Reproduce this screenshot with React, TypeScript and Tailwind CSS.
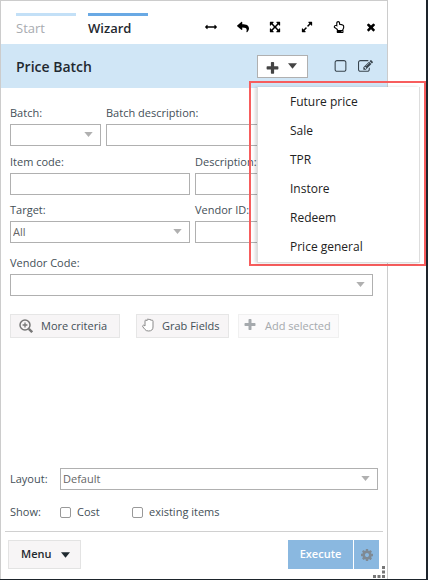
import React from "react";
import { FaReply, FaRegHandPointUp } from "react-icons/fa";

const ICONS = {
  arrowsH:
    "M1792 896q0 26-19 45l-256 256q-19 19-45 19t-45-19-19-45v-128h-1024v128q0 26-19 45t-45 19-45-19l-256-256q-19-19-19-45t19-45l256-256q19-19 45-19t45 19 19 45v128h1024v-128q0-26 19-45t45-19 45 19l256 256q19 19 19 45z",
  arrowsAlt:
    "M1411 541l-355 355 355 355 144-144q29-31 70-14 39 17 39 59v448q0 26-19 45t-45 19h-448q-42 0-59-40-17-39 14-69l144-144-355-355-355 355 144 144q31 30 14 69-17 40-59 40h-448q-26 0-45-19t-19-45v-448q0-42 40-59 39-17 69 14l144 144 355-355-355-355-144 144q-19 19-45 19-12 0-24-5-40-17-40-59v-448q0-26 19-45t45-19h448q42 0 59 40 17 39-14 69l-144 144 355 355 355-355-144-144q-31-30-14-69 17-40 59-40h448q26 0 45 19t19 45v448q0 42-39 59-13 5-25 5-26 0-45-19z",
  expand:
    "M883 1056q0 13-10 23l-332 332 144 144q19 19 19 45t-19 45-45 19h-448q-26 0-45-19t-19-45v-448q0-26 19-45t45-19 45 19l144 144 332-332q10-10 23-10t23 10l114 114q10 10 10 23zm781-864v448q0 26-19 45t-45 19-45-19l-144-144-332 332q-10 10-23 10t-23-10l-114-114q-10-10-10-23t10-23l332-332-144-144q-19-19-19-45t19-45 45-19h448q26 0 45 19t19 45z",
  times:
    "M1490 1322q0 40-28 68l-136 136q-28 28-68 28t-68-28l-294-294-294 294q-28 28-68 28t-68-28l-136-136q-28-28-28-68t28-68l294-294-294-294q-28-28-28-68t28-68l136-136q28-28 68-28t68 28l294 294 294-294q28-28 68-28t68 28l136 136q28 28 28 68t-28 68l-294 294 294 294q28 28 28 68z",
  edit:
    "M888 1184l116-116-152-152-116 116v56h96v96h56zm440-720q-16-16-33 1l-350 350q-17 17-1 33t33-1l350-350q17-17 1-33zm80 594v190q0 119-84.500 203.500t-203.500 84.500h-832q-119 0-203.500-84.500t-84.500-203.500v-832q0-119 84.500-203.500t203.500-84.500h832q63 0 117 25 15 7 18 23 3 17-9 29l-49 49q-14 14-32 8-23-6-45-6h-832q-66 0-113 47t-47 113v832q0 66 47 113t113 47h832q66 0 113-47t47-113v-126q0-13 9-22l64-64q15-15 35-7t20 29zm-96-738l288 288-672 672h-288v-288zm444 132l-92 92-288-288 92-92q28-28 68-28t68 28l152 152q28 28 28 68t-28 68z",
  square:
    "M1312 256h-832q-66 0-113 47t-47 113v832q0 66 47 113t113 47h832q66 0 113-47t47-113v-832q0-66-47-113t-113-47zm288 160v832q0 119-84.500 203.500t-203.500 84.500h-832q-119 0-203.500-84.500t-84.500-203.500v-832q0-119 84.500-203.500t203.500-84.500h832q119 0 203.500 84.500t84.500 203.500z",
  plus:
    "M1600 736v192q0 40-28 68t-68 28h-416v416q0 40-28 68t-68 28h-192q-40 0-68-28t-28-68v-416h-416q-40 0-68-28t-28-68v-192q0-40 28-68t68-28h416v-416q0-40 28-68t68-28h192q40 0 68 28t28 68v416h416q40 0 68 28t28 68z",
  cog:
    "M1152 896q0-106-75-181t-181-75-181 75-75 181 75 181 181 75 181-75 75-181zm512-109v222q0 12-8 23t-20 13l-185 28q-19 54-39 91 35 50 107 138 10 12 10 25t-9 23q-27 37-99 108t-94 71q-12 0-26-9l-138-108q-44 23-91 38-16 136-29 186-7 28-36 28h-222q-14 0-24.500-8.500t-11.500-21.500l-28-184q-49-16-90-37l-141 107q-10 9-25 9-14 0-25-11-126-114-165-168-7-10-7-23 0-12 8-23 15-21 51-66.500t54-70.500q-27-50-41-99l-183-27q-13-2-21-12.500t-8-23.500v-222q0-12 8-23t19-13l186-28q14-46 39-92-40-57-107-138-10-12-10-24 0-10 9-23 26-36 98.500-107.500t94.500-71.500q13 0 26 10l138 107q44-23 91-38 16-136 29-186 7-28 36-28h222q14 0 24.500 8.500t11.500 21.500l28 184q49 16 90 37l142-107q9-9 24-9 13 0 25 10 129 119 165 170 7 8 7 22 0 12-8 23-15 21-51 66.500t-54 70.500q26 50 41 98l183 28q13 2 21 12.500t8 23.500z",
};

function Icon({ name, className }: { name: keyof typeof ICONS; className: string }) {
  return (
    <svg viewBox="0 0 1792 1792" fill="currentColor" aria-hidden="true" className={className}>
      <path d={ICONS[name]} />
    </svg>
  );
}

function Caret({ className }: { className: string }) {
  return (
    <svg viewBox="0 0 10 6" fill="currentColor" aria-hidden="true" className={className}>
      <path d="M0 0h10L5 6z" />
    </svg>
  );
}

function ZoomIcon() {
  return (
    <svg viewBox="0 0 14 14" fill="none" stroke="currentColor" aria-hidden="true" className="size-[14px] text-[#777]">
      <circle cx="6" cy="6" r="5" strokeWidth="1.500" />
      <path d="M6 3.600v4.800M3.600 6h4.800" strokeWidth="1.300" />
      <path d="M9.800 9.800l3.400 3.400" strokeWidth="2.400" />
    </svg>
  );
}

function HandIcon() {
  return (
    <svg viewBox="0 0 12 14" fill="#fff" stroke="currentColor" strokeLinejoin="round" aria-hidden="true" className="mb-[2px] h-[14px] w-3 text-[#8a8a8a]">
      <path d="M3 8V3q0-1 .9-1t1 .9Q4.900 1 5.900 1T7 2q.1-.7 1-.7T9 2.500q.2-.5 1-.5t1 1.200V9q0 4-4.500 4Q4 13 3 11.500L.8 8.800Q.3 7.500 1.300 7.200 2 7 3 8z" />
    </svg>
  );
}

const box = "h-[22px] w-full rounded-none border border-[#b0b0b0] bg-white text-[11px] text-[#666] outline-none";

function TextField({ id, label, className }: { id: string; label: string; className: string }) {
  return (
    <div className={className}>
      <label htmlFor={id} className="mb-px block h-5 leading-5 whitespace-nowrap">
        {label}
      </label>
      <input id={id} type="text" className={`${box} block`} />
    </div>
  );
}

function Select({ id, value }: { id: string; value: string }) {
  return (
    <div className="relative flex-1">
      <select id={id} defaultValue={value} className={`${box} block appearance-none pl-[2px]`}>
        <option value={value}>{value}</option>
      </select>
      <Caret className="pointer-events-none absolute top-2 right-2 h-[5px] w-[9px] text-[#b0b0b0]" />
    </div>
  );
}

function SelectField({ id, label, value, className }: { id: string; label: string; value: string; className: string }) {
  return (
    <div className={className}>
      <label htmlFor={id} className="mb-px block h-5 leading-5 whitespace-nowrap">
        {label}
      </label>
      <Select id={id} value={value} />
    </div>
  );
}

const priceTypes = ["Future price", "Sale", "TPR", "Instore", "Redeem", "Price general"];

function AddMenu() {
  return (
    <div className="relative">
      <button type="button" aria-label="Add" className="flex h-[23px] w-[51px] items-center gap-2 border border-[#b0b0b0] bg-white pl-[7px] text-[#444]">
        <Icon name="plus" className="mt-1 size-[15px]" />
        <Caret className="h-[6px] w-[9px]" />
      </button>
      <div className="absolute top-[26px] -left-2 z-10 w-[177px] border-2 border-[#f75d5d] pt-1 pr-1 pb-px pl-[6px]">
        <ul role="menu" className="border-r border-b border-l border-[#ddd] bg-white pt-px shadow-[-2px_0_3px_rgba(0,0,0,0.15)]">
          {priceTypes.map((type) => (
            <li key={type}>
              <button type="button" role="menuitem" className="block h-[29px] w-full pl-8 text-left text-[12px] text-[#222]">
                {type}
              </button>
            </li>
          ))}
        </ul>
      </div>
    </div>
  );
}

const tool = "flex size-[14px] items-center justify-center";

export default function App() {
  return (
    <div className="min-h-screen border-r-2 border-b border-[#1d242b] bg-white font-['Open_Sans','Noto_Sans',sans-serif] text-[11px] text-[#444f57]">
      <main className="relative mr-[38px] flex min-h-[579px] flex-col border-t border-r border-l border-[#ccc]">
        <header className="flex h-[43px] pl-[15px]">
          <nav className="flex gap-3 pt-3 text-[13px]">
            <button type="button" className="flex w-[60px] items-start border-t-3 border-[#c3e0f7] pt-[3px] text-[#a8abb0]">
              Start
            </button>
            <button type="button" className="flex w-[60px] items-start border-t-3 border-[#69a9e4] pt-[3px] font-semibold text-[#1f2930]">
              Wizard
            </button>
          </nav>
          <div className="mr-[9px] ml-auto flex items-center gap-[18px] pt-2 text-black">
            <button type="button" aria-label="Resize width" className={tool}><Icon name="arrowsH" className="size-3" /></button>
            <button type="button" aria-label="Back" className={tool}><FaReply className="size-3" /></button>
            <button type="button" aria-label="Fit" className={tool}><Icon name="arrowsAlt" className="size-3" /></button>
            <button type="button" aria-label="Expand" className={tool}><Icon name="expand" className="size-3" /></button>
            <button type="button" aria-label="Point" className={tool}><FaRegHandPointUp className="size-3" /></button>
            <button type="button" aria-label="Close" className={tool}><Icon name="times" className="size-3" /></button>
          </div>
        </header>

        <div className="flex h-11 items-center bg-[#d0e6f6] pl-[15px]">
          <h1 className="text-[14px] font-semibold text-[#1f2930]">Price Batch</h1>
          <div className="mr-[14px] ml-auto flex items-center text-[#39454e]">
            <AddMenu />
            <button type="button" aria-label="Select" className="ml-[25px]"><Icon name="square" className="size-[15px]" /></button>
            <button type="button" aria-label="Edit" className="ml-[10px]"><Icon name="edit" className="size-[15px]" /></button>
          </div>
        </div>

        <form className="flex flex-1 flex-col pt-[15px]" onSubmit={(event) => event.preventDefault()}>
          <div className="flex flex-col pr-[14px] pl-[9px]">
            <div className="flex gap-[5px]">
              <SelectField id="batch" label="Batch:" value="" className="w-[91px]" />
              <TextField id="batch-description" label="Batch description:" className="flex-1" />
            </div>
            <div className="mt-[6px] flex gap-[5px]">
              <TextField id="item-code" label="Item code:" className="w-[180px]" />
              <TextField id="description" label="Description:" className="flex-1" />
            </div>
            <div className="mt-[5px] flex gap-[5px]">
              <SelectField id="target" label="Target:" value="All" className="w-[180px]" />
              <TextField id="vendor-id" label="Vendor ID:" className="flex-1" />
            </div>
            <SelectField id="vendor-code" label="Vendor Code:" value="" className="mt-[10px]" />
            <div className="mt-[18px] flex">
              <button type="button" className="flex h-6 w-[110px] items-center gap-2 border border-[#e6e6e6] bg-[#f7f5f6] pl-2">
                <ZoomIcon />
                More criteria
              </button>
              <button type="button" className="ml-4 flex h-6 w-[93px] items-center gap-2 border border-[#e6e6e6] bg-[#f7f5f6] pl-[5px]">
                <HandIcon />
                Grab Fields
              </button>
              <button type="button" disabled className="ml-[9px] flex h-6 w-[101px] items-center gap-2 border border-[#f0f0f0] bg-[#fbfafb] pl-1 text-[#a5a9ad]">
                <Icon name="plus" className="mb-[2px] size-[14px]" />
                Add selected
              </button>
            </div>
          </div>

          <div className="mt-auto flex items-center pr-[9px] pl-[9px]">
            <label htmlFor="layout" className="w-[50px]">Layout:</label>
            <Select id="layout" value="Default" />
          </div>
          <div className="mt-3 flex h-5 items-center pl-[9px]">
            <span className="w-[50px]">Show:</span>
            <label className="flex w-[72px] items-center gap-[6px]">
              <input type="checkbox" className="size-[11px] appearance-none rounded-[2px] border border-[#999] bg-white" />
              Cost
            </label>
            <label className="flex items-center gap-[6px]">
              <input type="checkbox" className="size-[11px] appearance-none rounded-[2px] border border-[#999] bg-white" />
              existing items
            </label>
          </div>
          <footer className="mx-1 mt-[9px] flex h-[48px] items-start justify-between border-t border-[#d0d0d0] pt-2 pr-[4px] pl-[3px]">
            <button type="button" className="flex h-[29px] w-[73px] items-center gap-[10px] border border-[#e3e3e3] bg-[#f7f5f6] pl-3 font-semibold text-[#1f2930]">
              Menu
              <Caret className="h-[6px] w-[9px]" />
            </button>
            <div className="flex h-[29px] gap-px text-white">
              <button type="submit" className="w-[65px] bg-[#8ab8e0] font-semibold">Execute</button>
              <button type="button" aria-label="Settings" className="flex w-[25px] items-center justify-center bg-[#8ab8e0] text-[#7f8a94]">
                <Icon name="cog" className="size-[14px]" />
              </button>
            </div>
          </footer>
        </form>
        <svg viewBox="0 0 12 12" fill="#777" aria-hidden="true" className="absolute right-[2px] bottom-[1px] size-3">
          <path d="M9 0h3v3h-3zM9 4.500h3v3h-3zM9 9h3v3h-3zM4.500 9h3v3h-3zM0 9h3v3h-3z" />
        </svg>
      </main>
    </div>
  );
}
